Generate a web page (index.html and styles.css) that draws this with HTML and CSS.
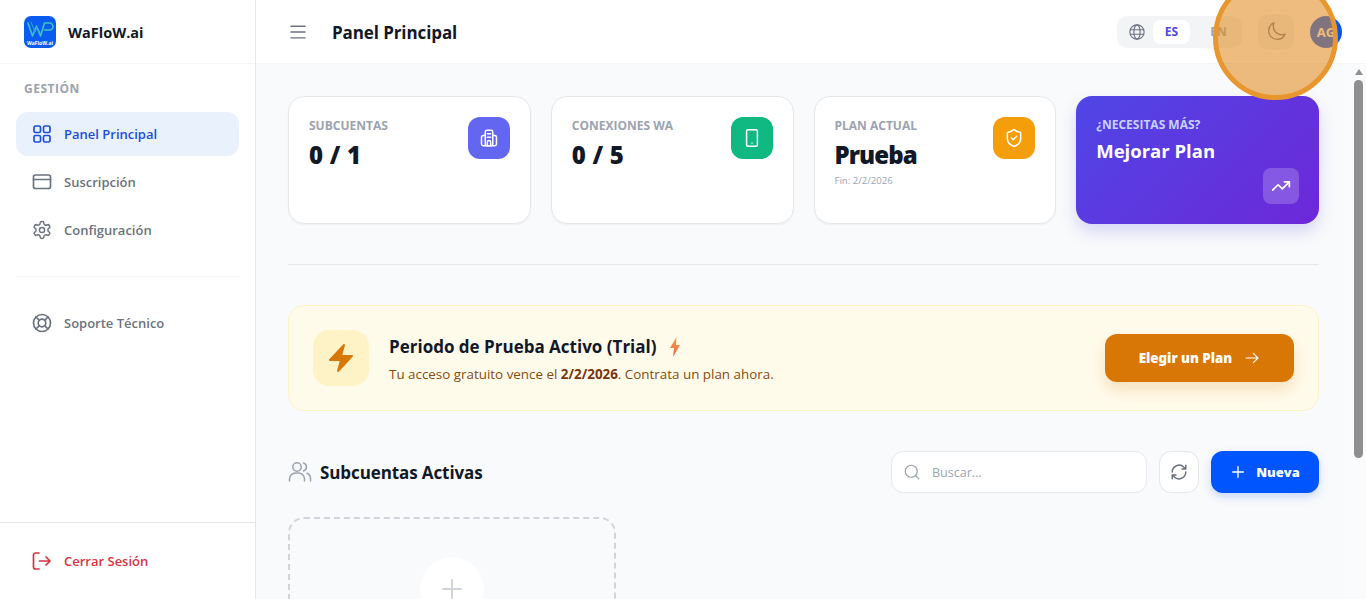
FILE: index.html
```html
<!DOCTYPE html>
<html lang="es">
<head>
<meta charset="utf-8">
<title>WaFloW.ai</title>
<link rel="stylesheet" href="styles.css">
</head>
<body>
<div class="app">
  <aside class="sidebar">
    <div class="brand">
      <svg class="logo" viewBox="0 0 32 32">
        <rect width="32" height="32" rx="7" fill="#0a5cf0"/>
        <path d="M4 7l4.500 13 4-10 4 10 4-13h5a3.500 3.500 0 0 1 0 7h-5" fill="none" stroke="#3fc4c4" stroke-width="1.600"/>
        <path d="M7 6l4 10 2-5 3 5" fill="none" stroke="#2aa4e8" stroke-width="1"/>
        <text x="16" y="28.500" class="logo-text" text-anchor="middle">WaFloW.ai</text>
      </svg>
      <span class="brand-name">WaFloW.ai</span>
    </div>
    <nav class="nav">
      <div class="nav-title">GESTIÓN</div>
      <a class="nav-item active">
        <svg class="ico" viewBox="0 0 24 24"><rect x="4" y="4" width="6.500" height="6.500" rx="1.500"/><rect x="13.500" y="4" width="6.500" height="6.500" rx="1.500"/><rect x="4" y="13.500" width="6.500" height="6.500" rx="1.500"/><rect x="13.500" y="13.500" width="6.500" height="6.500" rx="1.500"/></svg>
        Panel Principal
      </a>
      <a class="nav-item">
        <svg class="ico" viewBox="0 0 24 24"><rect x="3.500" y="5" width="17" height="13.500" rx="2"/><path d="M3.500 9.500h17"/></svg>
        Suscripción
      </a>
      <a class="nav-item">
        <svg class="ico" viewBox="-2 -2 28 28"><path d="M12.220 2h-.44a2 2 0 0 0-2 2v.18a2 2 0 0 1-1 1.730l-.43.25a2 2 0 0 1-2 0l-.15-.08a2 2 0 0 0-2.730.73l-.22.38a2 2 0 0 0 .73 2.730l.15.1a2 2 0 0 1 1 1.720v.51a2 2 0 0 1-1 1.740l-.15.09a2 2 0 0 0-.73 2.730l.22.38a2 2 0 0 0 2.730.73l.15-.08a2 2 0 0 1 2 0l.43.25a2 2 0 0 1 1 1.730V20a2 2 0 0 0 2 2h.44a2 2 0 0 0 2-2v-.18a2 2 0 0 1 1-1.730l.43-.25a2 2 0 0 1 2 0l.15.08a2 2 0 0 0 2.730-.73l.22-.39a2 2 0 0 0-.73-2.730l-.15-.08a2 2 0 0 1-1-1.740v-.5a2 2 0 0 1 1-1.740l.15-.09a2 2 0 0 0 .73-2.730l-.22-.38a2 2 0 0 0-2.730-.73l-.15.08a2 2 0 0 1-2 0l-.43-.25a2 2 0 0 1-1-1.730V4a2 2 0 0 0-2-2z"/><circle cx="12" cy="12" r="3"/></svg>
        Configuración
      </a>
      <div class="nav-sep"></div>
      <a class="nav-item">
        <svg class="ico" viewBox="0 0 24 24"><circle cx="12" cy="12" r="8.500"/><circle cx="12" cy="12" r="3.800"/><path d="M6 6l3.300 3.300M14.700 14.700L18 18M18 6l-3.300 3.300M9.300 14.700L6 18"/></svg>
        Soporte Técnico
      </a>
    </nav>
    <div class="side-foot">
      <a class="nav-item danger">
        <svg class="ico" viewBox="0 0 24 24"><path d="M9 4H5.500a2 2 0 0 0-2 2v12a2 2 0 0 0 2 2H9"/><path d="M9.500 12H20M16 8l4 4-4 4"/></svg>
        Cerrar Sesión
      </a>
    </div>
  </aside>

  <div class="main">
    <header class="topbar">
      <div class="top-left">
        <svg class="menu-ico" viewBox="0 0 24 24"><path d="M3.500 5h17M3.500 12h17M3.500 19h17"/></svg>
        <h1 class="page-title">Panel Principal</h1>
      </div>
      <div class="top-right">
        <div class="lang">
          <svg class="globe" viewBox="0 0 24 24"><circle cx="12" cy="12" r="9.500"/><ellipse cx="12" cy="12" rx="4.200" ry="9.500"/><path d="M3 9h18M3 15h18"/></svg>
          <span class="lang-btn on">ES</span>
          <span class="lang-btn off">EN</span>
        </div>
        <div class="theme-btn">
          <svg class="moon" viewBox="0 0 24 24"><path d="M21.752 15.002A9.720 9.720 0 0 1 18 15.750c-5.385 0-9.750-4.365-9.750-9.750 0-1.330.266-2.597.748-3.752A9.753 9.753 0 0 0 3 11.250C3 16.635 7.365 21 12.750 21a9.753 9.753 0 0 0 9.002-5.998Z"/></svg>
        </div>
        <div class="avatar">AG</div>
      </div>
    </header>

    <div class="body-row">
      <main class="content">
        <section class="stats">
          <div class="stat">
            <div>
              <div class="stat-label">SUBCUENTAS</div>
              <div class="stat-value">0 / 1</div>
            </div>
            <div class="stat-ico indigo">
              <svg viewBox="0 0 24 24"><rect x="7.500" y="2.800" width="9" height="18.400" rx="2"/><path d="M7.500 9H5a2 2 0 0 0-2 2v8.200a2 2 0 0 0 2 2h14a2 2 0 0 0 2-2V11a2 2 0 0 0-2-2h-2.500M10 7h4M10 11h4M10 21v-4a2 2 0 0 1 4 0v4"/></svg>
            </div>
          </div>
          <div class="stat">
            <div>
              <div class="stat-label">CONEXIONES WA</div>
              <div class="stat-value">0 / 5</div>
            </div>
            <div class="stat-ico green">
              <svg viewBox="0 0 24 24"><rect x="5.500" y="2" width="13" height="20" rx="2"/><path d="M12 18h.01"/></svg>
            </div>
          </div>
          <div class="stat">
            <div>
              <div class="stat-label">PLAN ACTUAL</div>
              <div class="stat-value plan">Prueba</div>
              <div class="stat-note">Fin: 2/2/2026</div>
            </div>
            <div class="stat-ico amber">
              <svg viewBox="0 0 24 24"><path d="M20 13c0 5-3.500 7.500-7.660 8.950a1 1 0 0 1-.67-.01C7.500 20.500 4 18 4 13V6a1 1 0 0 1 1-1c2 0 4.500-1.200 6.240-2.720a1.170 1.170 0 0 1 1.520 0C14.510 3.810 17 5 19 5a1 1 0 0 1 1 1z"/><path d="M9 12l2 2 4-4"/></svg>
            </div>
          </div>
          <div class="upgrade">
            <div class="up-label">¿NECESITAS MÁS?</div>
            <div class="up-title">Mejorar Plan</div>
            <div class="up-ico">
              <svg viewBox="0 0 24 24"><path d="M22 7l-8.500 8.500-5-5L2 17"/><path d="M16 7h6v6"/></svg>
            </div>
          </div>
        </section>

        <div class="divider"></div>

        <section class="trial">
          <div class="trial-left">
            <div class="trial-ico">
              <svg viewBox="0 0 24 24"><path d="M14.615 1.595a.750.750 0 0 1 .359.852L12.982 9.750h7.268a.750.750 0 0 1 .548 1.262l-10.500 11.250a.750.750 0 0 1-1.272-.71l1.992-7.302H3.750a.750.750 0 0 1-.548-1.262l10.500-11.250a.750.750 0 0 1 .913-.143Z"/></svg>
            </div>
            <div class="trial-text">
              <div class="trial-title">Periodo de Prueba Activo (Trial)
                <svg class="mini-bolt" viewBox="0 0 12 20"><defs><linearGradient id="bg" x1="0" y1="0" x2="0" y2="1"><stop offset="0" stop-color="#f8a24a"/><stop offset="1" stop-color="#e8694a"/></linearGradient></defs><path d="M7.500 0L1 11h4l-1 9 7-12H7z" fill="url(#bg)"/></svg>
              </div>
              <div class="trial-sub">Tu acceso gratuito vence el <b>2/2/2026</b>. Contrata un plan ahora.</div>
            </div>
          </div>
          <div class="trial-btn">Elegir un Plan
            <svg viewBox="0 0 24 24"><path d="M3 12h18M14 5l7 7-7 7"/></svg>
          </div>
        </section>

        <section class="sub-head">
          <div class="sub-title">
            <svg viewBox="0 0 24 24"><circle cx="9" cy="7" r="4.200"/><path d="M1.500 21v-2a6 6 0 0 1 6-6h3a6 6 0 0 1 6 6v2"/><path d="M15.500 3a4.200 4.200 0 0 1 0 8M19 13.300a6 6 0 0 1 3.500 5.700v2"/></svg>
            <h2>Subcuentas Activas</h2>
          </div>
          <div class="sub-tools">
            <label class="search">
              <svg viewBox="0 0 24 24"><circle cx="11" cy="11" r="8"/><path d="M21 21l-4.300-4.300"/></svg>
              <span>Buscar...</span>
            </label>
            <div class="refresh">
              <svg viewBox="0 0 24 24"><path d="M3 12a9 9 0 0 1 15.500-6.300L21 8M21 3v5h-5M21 12a9 9 0 0 1-15.500 6.300L3 16M3 21v-5h5"/></svg>
            </div>
            <div class="new-btn">
              <svg viewBox="0 0 24 24"><path d="M12 4v16M4 12h16"/></svg>
              Nueva
            </div>
          </div>
        </section>

        <section class="sub-grid">
          <div class="add-card">
            <div class="add-circle">
              <svg viewBox="0 0 24 24"><path d="M12 3v18M3 12h18"/></svg>
            </div>
          </div>
        </section>
      </main>
      <div class="scrollbar">
        <div class="scroll-up"></div>
        <div class="scroll-thumb"></div>
      </div>
    </div>
  </div>
</div>
<div class="spot"></div>
</body>
</html>
```

FILE: styles.css
```css
* { box-sizing: border-box; }
html, body { margin: 0; height: 100%; overflow: hidden; }
body { font-family: "Open Sans", "Noto Sans", sans-serif; color: #111827; background: #f9fafb; }
svg { display: block; flex: none; fill: none; stroke: currentColor; stroke-width: 1.7; stroke-linecap: round; stroke-linejoin: round; }

.app { display: flex; height: 599px; }

.sidebar { width: 256px; flex: none; background: #fff; border-right: 1px solid #e5e7eb; display: flex; flex-direction: column; }
.brand { height: 64px; display: flex; align-items: center; gap: 12px; padding: 0 24px; border-bottom: 1px solid #f3f4f6; }
.logo { width: 32px; height: 32px; stroke: none; }
.logo-text { font-size: 5px; font-weight: 700; fill: #fff; stroke: none; }
.brand-name { font-size: 14.500px; font-weight: 700; color: #111827; padding-top: 2px; }

.nav { flex: 1; padding: 16px 16px 0; display: flex; flex-direction: column; gap: 4px; }
.nav-title { font-size: 12px; font-weight: 700; color: #9ca3af; letter-spacing: .5px; line-height: 16px; padding: 1px 8px 0; margin-bottom: 11px; }
.nav-item { display: flex; align-items: center; gap: 10px; height: 44px; padding: 0 14px; border-radius: 12px; font-size: 13px; font-weight: 600; color: #6b7280; }
.nav-item .ico { width: 24px; height: 24px; color: #6b7280; }
.nav-item.active { background: #e9f1fd; color: #1d4ed8; }
.nav-item.active .ico { color: #1d4ed8; }
.nav-sep { height: 1px; background: #f3f4f6; margin: 20px 0; flex: none; }
.side-foot { padding: 16px; border-top: 1px solid #e5e7eb; }
.nav-item.danger { color: #d4343f; }
.nav-item.danger .ico { color: #d4343f; }

.main { flex: 1; min-width: 0; display: flex; flex-direction: column; }
.topbar { height: 64px; flex: none; background: #fff; border-bottom: 1px solid #f3f4f6; display: flex; align-items: center; justify-content: space-between; padding: 0 24px 0 32px; }
.top-left { display: flex; align-items: center; gap: 24px; }
.menu-ico { width: 20px; height: 20px; color: #6b7280; stroke-width: 1.700; }
.page-title { margin: 0; padding-top: 2px; font-size: 17px; font-weight: 700; letter-spacing: -.1px; color: #111827; }
.top-right { display: flex; align-items: center; gap: 16px; }
.lang { width: 125px; height: 32px; display: flex; align-items: center; background: #f3f4f6; border-radius: 10px; padding: 0 4px 0 11px; gap: 7px; }
.globe { width: 18px; height: 18px; color: #6b7280; stroke-width: 1.500; }
.lang-btn { width: 37px; height: 24px; line-height: 24px; text-align: center; font-size: 12px; font-weight: 700; color: #9ca3af; border-radius: 8px; }
.lang-btn.on { background: #fff; color: #4f46e5; }
.lang-btn.off { margin-left: 3px; }
.theme-btn { width: 36px; height: 36px; border-radius: 10px; background: #f3f4f6; display: flex; align-items: center; justify-content: center; }
.moon { width: 21px; height: 21px; color: #6b7280; stroke-width: 1.500; }
.avatar { width: 32px; height: 32px; border-radius: 50%; background: #0055ff; color: #fff; font-size: 13px; font-weight: 700; display: flex; align-items: center; justify-content: center; }

.body-row { flex: 1; min-height: 0; display: flex; }
.content { flex: 1; min-width: 0; overflow: hidden; padding: 32px; background: #f9fafb; }
.scrollbar { width: 15px; flex: none; background: #fbfbfc; display: flex; flex-direction: column; align-items: center; padding-top: 5px; gap: 5px; }
.scroll-up { width: 0; height: 0; border-left: 4px solid transparent; border-right: 4px solid transparent; border-bottom: 6px solid #8f8f8f; }
.scroll-thumb { width: 9px; height: 378px; border-radius: 5px; background: #8f8f8f; }

.stats { display: grid; grid-template-columns: repeat(4, 1fr); gap: 20px; }
.stat { height: 128px; background: #fff; border: 1px solid #e5e7eb; border-radius: 16px; padding: 20px; display: flex; justify-content: space-between; align-items: flex-start; box-shadow: 0 1px 2px rgba(0,0,0,.04); }
.stat-label { font-size: 12px; font-weight: 700; color: #9ca3af; line-height: 18px; }
.stat-value { font-family: "Noto Sans", sans-serif; font-size: 24px; font-weight: 900; color: #111827; line-height: 32px; margin-top: 4px; letter-spacing: .2px; }
.stat-value.plan { letter-spacing: -.9px; }
.stat-note { font-size: 9.600px; color: #9ca3af; line-height: 14px; margin-top: 3px; }
.stat-ico { width: 42px; height: 42px; border-radius: 12px; display: flex; align-items: center; justify-content: center; color: #fff; }
.stat-ico svg { width: 20px; height: 20px; stroke-width: 1.800; }
.indigo { background: #6366f1; }
.green { background: #10b981; }
.amber { background: #f59e0b; }
.upgrade { position: relative; height: 128px; border-radius: 16px; padding: 20px; background: linear-gradient(135deg, #4f46e5, #6d28d9); color: #fff; box-shadow: 0 8px 16px rgba(79,70,229,.2); }
.up-label { font-size: 12px; font-weight: 700; color: #c7d2fe; line-height: 16px; margin-top: 1px; }
.up-title { font-size: 18.500px; font-weight: 700; line-height: 24px; margin-top: 6px; }
.up-ico { position: absolute; right: 20px; bottom: 20px; width: 36px; height: 36px; border-radius: 8px; background: rgba(255,255,255,.2); display: flex; align-items: center; justify-content: center; }
.up-ico svg { width: 20px; height: 20px; stroke-width: 2; }

.divider { height: 1px; background: #e5e7eb; margin: 40px 0; }

.trial { height: 106px; background: #fffbeb; border: 1px solid #fef3c7; border-radius: 16px; padding: 0 24px; display: flex; align-items: center; justify-content: space-between; }
.trial-left { display: flex; align-items: center; gap: 20px; }
.trial-ico { width: 56px; height: 56px; border-radius: 16px; background: #fef3c7; display: flex; align-items: center; justify-content: center; }
.trial-ico svg { width: 32px; height: 32px; fill: #d97706; stroke: none; }
.trial-text { padding-top: 2px; }
.trial-title { display: flex; align-items: center; gap: 12px; font-size: 17px; font-weight: 700; color: #111827; line-height: 24px; }
.mini-bolt { width: 12px; height: 20px; stroke: none; }
.trial-sub { font-size: 13.400px; color: #854d0e; line-height: 20px; margin-top: 5px; }
.trial-sub b { font-weight: 700; color: #78350f; }
.trial-btn { width: 189px; height: 48px; border-radius: 12px; background: #d97706; color: #fff; font-family: "Noto Sans", sans-serif; font-size: 13.300px; font-weight: 900; display: flex; align-items: center; justify-content: center; gap: 12px; box-shadow: 0 8px 16px rgba(217,119,6,.2); }
.trial-btn svg { width: 16px; height: 16px; }

.sub-head { display: flex; align-items: center; justify-content: space-between; margin-top: 40px; }
.sub-title { display: flex; align-items: center; gap: 8px; }
.sub-title svg { width: 24px; height: 24px; color: #9ca3af; stroke-width: 1.500; }
.sub-title h2 { margin: 0; font-size: 17px; font-weight: 700; letter-spacing: -.1px; color: #111827; }
.sub-tools { display: flex; align-items: center; gap: 12px; }
.search { width: 256px; height: 42px; background: #fff; border: 1px solid #e5e7eb; border-radius: 12px; display: flex; align-items: center; gap: 11px; padding: 0 11px; font-size: 12.500px; color: #9ca3af; }
.search svg { width: 18px; height: 18px; stroke-width: 1.600; }
.refresh { width: 40px; height: 42px; background: #fff; border: 1px solid #e5e7eb; border-radius: 12px; display: flex; align-items: center; justify-content: center; color: #6b7280; }
.refresh svg { width: 18px; height: 18px; stroke-width: 2; }
.new-btn { width: 108px; height: 42px; border-radius: 12px; background: #0055ff; color: #fff; font-size: 13px; font-weight: 800; display: flex; align-items: center; justify-content: center; gap: 10px; box-shadow: 0 4px 10px rgba(0,85,255,.2); }
.new-btn svg { width: 16px; height: 16px; stroke-width: 2; }

.sub-grid { display: grid; grid-template-columns: repeat(3, 1fr); gap: 24px; margin-top: 24px; }
.add-card { height: 228px; border: 2px dashed #d1d5db; border-radius: 16px; display: flex; justify-content: center; padding-top: 38px; }
.add-circle { width: 64px; height: 64px; border-radius: 50%; background: #fff; display: flex; align-items: center; justify-content: center; color: #d1d5db; }
.add-circle svg { width: 24px; height: 24px; stroke-width: 2; }

.spot { position: absolute; left: 1213px; top: -25px; width: 125px; height: 125px; border-radius: 50%; background: rgba(224,140,32,.58); border: 5px solid #e8962e; }
```
